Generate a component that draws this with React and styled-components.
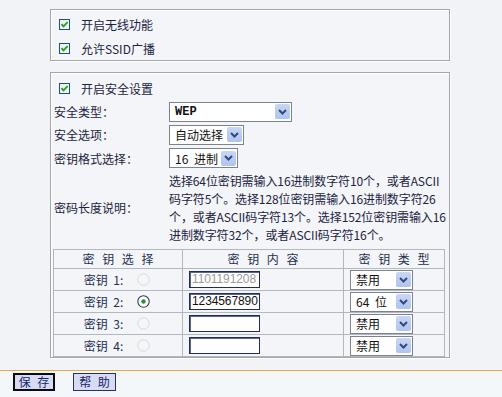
import React from 'react'
import styled, { createGlobalStyle } from 'styled-components'

const GlobalStyle = createGlobalStyle`
  html, body {
    margin: 0;
    padding: 0;
  }
  body {
    width: 502px;
    height: 397px;
    overflow: hidden;
    background: #f2f3f6;
    font-family: "Noto Sans CJK SC", "Noto Sans", sans-serif;
    font-size: 12px;
    color: #1b2440;
  }
`

const Page = styled.div`
  display: flex;
  flex-direction: column;
  height: 397px;
`

const Content = styled.div`
  box-sizing: border-box;
  height: 370px;
  display: flex;
  flex-direction: column;
  gap: 11px;
  padding: 9px 0 0 50px;
`

const Fieldset = styled.div`
  box-sizing: border-box;
  width: 400px;
  border: 1px solid #a3a6ab;
  box-shadow: inset 1px 1px 0 #fff, 1px 1px 0 #fff;
  background: #f4f5f8;
  padding: ${(p) => p.$pad};
  display: flex;
  flex-direction: column;
`

const CheckRow = styled.label`
  height: 24px;
  display: flex;
  align-items: center;
  gap: 11px;
  padding-left: 6px;
  white-space: nowrap;
`

const FieldRow = styled.div`
  height: ${(p) => p.$h}px;
  display: grid;
  grid-template-columns: 115px 1fr;
  align-items: center;
  padding-left: 1px;
  white-space: nowrap;
`

const Label = styled.span`
  color: #1b2440;
`

const Note = styled.div`
  padding-top: 2px;
  line-height: 18px;
  letter-spacing: -0.1px;
`

const NoteLine = styled.div`
  white-space: nowrap;
`

const SelectBox = styled.div`
  box-sizing: border-box;
  width: ${(p) => p.$w}px;
  height: 20px;
  border: 1px solid #7d838e;
  background: #fff;
  display: flex;
  align-items: center;
  justify-content: space-between;
  padding: 0 1px 0 5px;
  color: #111;
  word-spacing: 3px;
  font-family: ${(p) => (p.$mono ? '"Liberation Mono", "Noto Sans CJK SC", monospace' : 'inherit')};
  font-weight: ${(p) => (p.$mono ? 700 : 400)};
`

const ArrowBtn = styled.span`
  width: 15px;
  height: 15px;
  border-radius: 2px;
  background: linear-gradient(#c9d7f6, #aec3ee);
  display: flex;
  align-items: center;
  justify-content: center;
`

const KeyTable = styled.table`
  width: 100%;
  margin-top: 5px;
  border-collapse: collapse;
  table-layout: fixed;
  color: #24304f;
`

const HeadCell = styled.th`
  height: 18px;
  padding: 0;
  border: 1px solid #b3b7be;
  font-weight: normal;
  text-align: center;
  word-spacing: 5px;
  line-height: 18px;
`

const Cell = styled.td`
  height: 21px;
  padding: 0 0 0 ${(p) => p.$pad || 0}px;
  border: 1px solid #b3b7be;
`

const KeyName = styled.div`
  display: flex;
  align-items: center;
  justify-content: center;
  gap: 14px;
  padding-right: 2px;
  word-spacing: 3px;
`

const KeyInput = styled.div`
  box-sizing: border-box;
  width: 71px;
  height: 17px;
  border: 1px solid #1f2d58;
  box-shadow: inset 1px 1px 0 #5a6788;
  background: #fff;
  padding-left: 2px;
  font-family: "Liberation Sans", Arial, sans-serif;
  font-size: 12px;
  letter-spacing: -0.1px;
  line-height: 15px;
  white-space: nowrap;
  overflow: hidden;
  color: ${(p) => (p.$disabled ? '#9a9a9a' : '#111')};
`

const Footer = styled.div`
  flex: 1;
  border-top: 1px solid #e6a849;
  background: #f4f7fa;
  display: flex;
  gap: 18px;
  padding: 2px 0 0 13px;
`

const Button = styled.button`
  box-sizing: border-box;
  height: 18px;
  width: ${(p) => p.$w}px;
  padding: 0;
  background: #d7dcf4;
  border: ${(p) => (p.$default ? '2px solid #0c0c10' : '1px solid #2a3354')};
  font-family: "Noto Sans CJK SC", sans-serif;
  font-size: 12px;
  line-height: 14px;
  color: #16246a;
  word-spacing: 4px;
`

const Checkbox = () => (
  <svg width="11" height="11" viewBox="0 0 11 11">
    <rect x="0.5" y="0.5" width="10" height="10" fill="#f3f3ee" stroke="#1d4f7d" />
    <path d="M2.5 5.2 L4.5 7.4 L8.6 3.2" stroke="#22a322" strokeWidth="1.9" fill="none" />
  </svg>
)

const Chevron = () => (
  <svg width="9" height="6" viewBox="0 0 9 6">
    <path d="M1 1 L4.5 4.5 L8 1" stroke="#34497c" strokeWidth="2" fill="none" />
  </svg>
)

const Radio = ({ checked }) => (
  <svg width="13" height="13" viewBox="0 0 13 13">
    {checked ? (
      <>
        <circle cx="6.5" cy="6.5" r="5.7" fill="#fff" stroke="#2e3d5c" strokeWidth="1.1" />
        <circle cx="6.5" cy="6.5" r="2.2" fill="#2c8f33" />
      </>
    ) : (
      <circle cx="6.5" cy="6.5" r="5.7" fill="#f6f6f6" stroke="#d5d8dd" strokeWidth="1" />
    )}
  </svg>
)

const Select = ({ w, mono, children }) => (
  <SelectBox $w={w} $mono={mono}>
    <span>{children}</span>
    <ArrowBtn>
      <Chevron />
    </ArrowBtn>
  </SelectBox>
)

const noteLines = [
  '选择64位密钥需输入16进制数字符10个，或者ASCII',
  '码字符5个。选择128位密钥需输入16进制数字符26',
  '个，或者ASCII码字符13个。选择152位密钥需输入16',
  '进制数字符32个，或者ASCII码字符16个。',
]

const keys = [
  { n: 1, value: '1101191208', type: '禁用', checked: false, disabled: true },
  { n: 2, value: '1234567890', type: '64 位', checked: true },
  { n: 3, value: '', type: '禁用', checked: false },
  { n: 4, value: '', type: '禁用', checked: false },
]

export default function App() {
  return (
    <Page>
      <GlobalStyle />
      <Content>
        <Fieldset $pad="2px 0 0 2px">
          <CheckRow>
            <Checkbox />
            开启无线功能
          </CheckRow>
          <CheckRow>
            <Checkbox />
            允许SSID广播
          </CheckRow>
        </Fieldset>

        <Fieldset $pad="3px 4px 0 2px">
          <CheckRow>
            <Checkbox />
            开启安全设置
          </CheckRow>
          <FieldRow $h={23}>
            <Label>安全类型：</Label>
            <Select w={123} mono>WEP</Select>
          </FieldRow>
          <FieldRow $h={23}>
            <Label>安全选项：</Label>
            <Select w={75}>自动选择</Select>
          </FieldRow>
          <FieldRow $h={24}>
            <Label>密钥格式选择：</Label>
            <Select w={69}>16 进制</Select>
          </FieldRow>
          <FieldRow $h={74}>
            <Label>密码长度说明：</Label>
            <Note>
              {noteLines.map((l) => (
                <NoteLine key={l}>{l}</NoteLine>
              ))}
            </Note>
          </FieldRow>

          <KeyTable>
            <colgroup>
              <col style={{ width: 129 }} />
              <col style={{ width: 161 }} />
              <col style={{ width: 101 }} />
            </colgroup>
            <thead>
              <tr>
                <HeadCell>密 钥 选 择</HeadCell>
                <HeadCell>密 钥 内 容</HeadCell>
                <HeadCell>密 钥 类 型</HeadCell>
              </tr>
            </thead>
            <tbody>
              {keys.map((k) => (
                <tr key={k.n}>
                  <Cell>
                    <KeyName>
                      <span>密钥 {k.n}:</span>
                      <Radio checked={k.checked} />
                    </KeyName>
                  </Cell>
                  <Cell $pad={6}>
                    <KeyInput $disabled={k.disabled}>{k.value}</KeyInput>
                  </Cell>
                  <Cell $pad={6}>
                    <Select w={63}>{k.type}</Select>
                  </Cell>
                </tr>
              ))}
            </tbody>
          </KeyTable>
        </Fieldset>
      </Content>

      <Footer>
        <Button $w={42} $default>保 存</Button>
        <Button $w={43}>帮 助</Button>
      </Footer>
    </Page>
  )
}
